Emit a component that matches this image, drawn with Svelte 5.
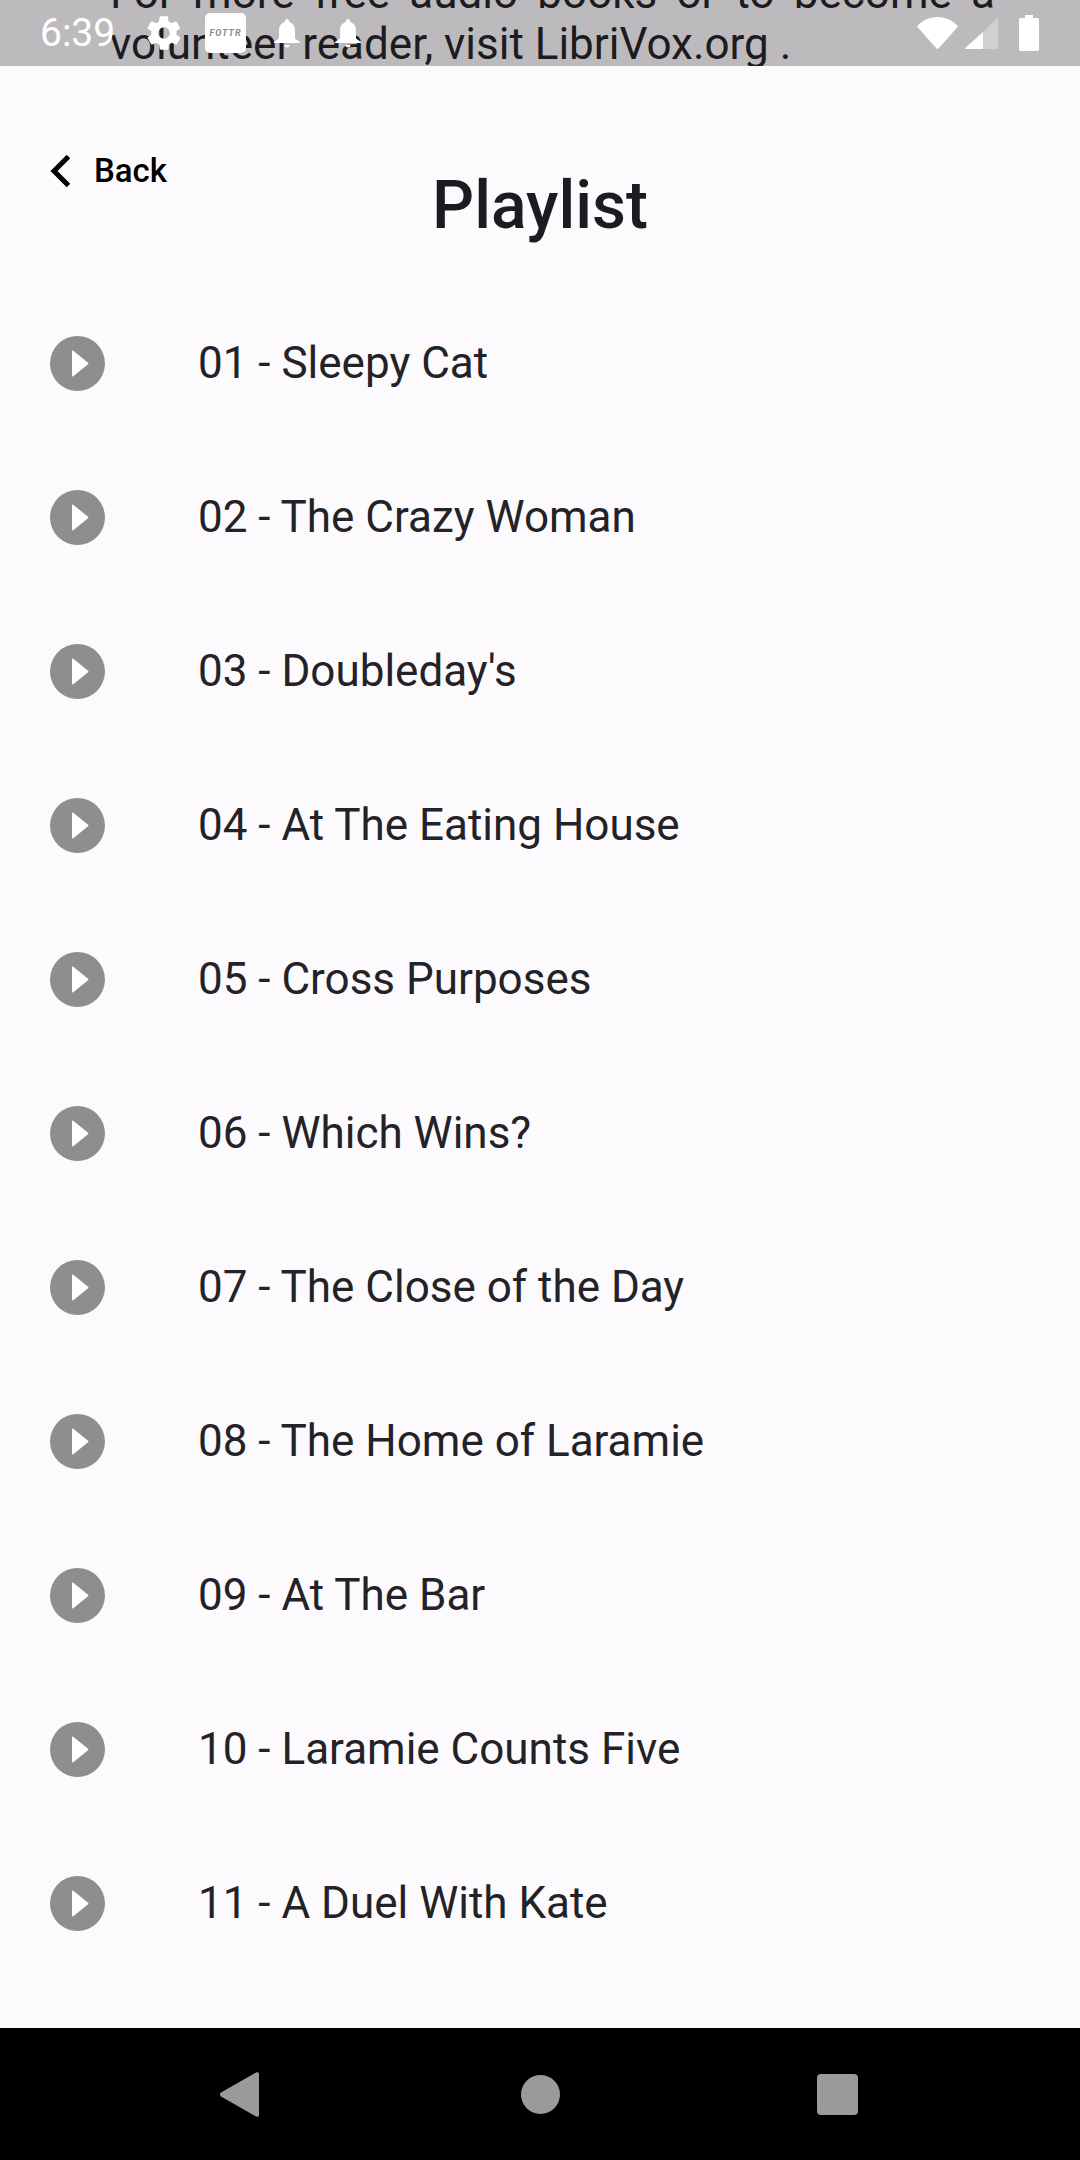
<script>
	const tracks = [
		'01 - Sleepy Cat',
		'02 - The Crazy Woman',
		"03 - Doubleday's",
		'04 - At The Eating House',
		'05 - Cross Purposes',
		'06 - Which Wins?',
		'07 - The Close of the Day',
		'08 - The Home of Laramie',
		'09 - At The Bar',
		'10 - Laramie Counts Five',
		'11 - A Duel With Kate'
	];
</script>

<div class="screen">
	<header class="status">
		<div class="behind">
			<p class="justified">For more free audio books or to become a</p>
			<p>volunteer reader, visit LibriVox.org .</p>
		</div>
		<div class="status-left">
			<span class="time">6:39</span>
			<svg class="gear" viewBox="0 0 24 24"><path d="M19.4 13c.1-.3.1-.7.1-1s0-.7-.1-1l2.1-1.600c.2-.2.2-.4.1-.6l-2-3.500c-.1-.2-.4-.3-.6-.2l-2.500 1c-.5-.4-1.100-.7-1.700-1l-.4-2.600c0-.3-.2-.5-.5-.5h-4c-.3 0-.5.2-.5.4l-.4 2.700c-.6.2-1.200.6-1.700 1l-2.500-1c-.2-.1-.5 0-.6.2l-2 3.500c-.1.2-.1.500.1.600L4.500 11c-.1.300-.1.700-.1 1s0 .7.100 1l-2.100 1.600c-.2.200-.2.400-.1.600l2 3.500c.1.200.4.300.6.200l2.500-1c.5.400 1.100.700 1.700 1l.4 2.600c0 .3.2.5.5.5h4c.3 0 .5-.2.5-.4l.4-2.700c.6-.2 1.200-.6 1.700-1l2.500 1c.2.100.5 0 .6-.2l2-3.500c.1-.2.100-.5-.1-.6zM12 15.500a3.500 3.500 0 1 1 0-7 3.500 3.500 0 0 1 0 7z"/></svg>
			<span class="tile">FOTTR</span>
			<svg class="bell" viewBox="0 0 26 29"><path d="M13 0c1.300 0 2.200 1 2.200 2.200v.8c3.800 1 5.800 4.300 5.800 8.200v8.300l5 3.500v1H0v-1l5-3.500v-8.300c0-3.900 2-7.200 5.800-8.200v-.8C10.800 1 11.700 0 13 0zM10.500 26h5a2.500 2.500 0 0 1-5 0z"/></svg>
			<svg class="bell second" viewBox="0 0 26 29"><path d="M13 0c1.300 0 2.200 1 2.200 2.200v.8c3.800 1 5.800 4.300 5.800 8.200v8.300l5 3.500v1H0v-1l5-3.500v-8.300c0-3.900 2-7.200 5.800-8.200v-.8C10.800 1 11.700 0 13 0zM10.500 26h5a2.500 2.500 0 0 1-5 0z"/></svg>
		</div>
		<div class="status-right">
			<svg class="wifi" viewBox="0 0 41 32"><path d="M0 9.500C5 3.500 12.500 0 20.500 0S36 3.500 41 9.500L21.500 31.500c-.6.600-1.400.600-2 0z"/></svg>
			<svg class="signal" viewBox="0 0 33 32"><path class="dim" d="M33 0v32H18V15z"/><path d="M18 15v17H1c-1 0-1-.7-.5-1.300z"/></svg>
			<svg class="battery" viewBox="0 0 20 36"><path d="M6 0h8v3h4.500c.8 0 1.500.7 1.500 1.500v30c0 .8-.7 1.500-1.500 1.500h-17C.7 36 0 35.300 0 34.500v-30C0 3.700.7 3 1.500 3H6z"/></svg>
		</div>
	</header>

	<main class="content">
		<div class="topbar">
			<button class="back">
				<svg viewBox="0 0 20 32"><path d="M18.500 1.500 4 16l14.500 14.500" /></svg>
				<span>Back</span>
			</button>
			<h1>Playlist</h1>
		</div>

		<ul class="list">
			{#each tracks as track}
				<li class="row">
					<span class="play">
						<svg viewBox="0 0 55 55"><path d="M22 15.500v24c0 .8.700 1.100 1.300.7L38 28.300c.5-.4.500-1.100 0-1.500L23.300 14.800c-.6-.4-1.300-.1-1.300.7z" /></svg>
					</span>
					<span class="name">{track}</span>
				</li>
			{/each}
		</ul>
	</main>

	<nav class="navbar">
		<svg class="nav-back" viewBox="0 0 39 45"><path d="M1 20.500 36 .500c1.500-.8 3 0 3 1.500v41c0 1.500-1.500 2.300-3 1.500L1 24.500c-1.300-.8-1.300-3.200 0-4z" /></svg>
		<span class="nav-home"></span>
		<span class="nav-recent"></span>
	</nav>
</div>

<style>
	:global(body) {
		margin: 0;
		background: #fcfafd;
	}

	.screen {
		display: flex;
		flex-direction: column;
		height: 2160px;
		font-family: Roboto, sans-serif;
		color: #1c1b1f;
		background: #fcfafd;
		overflow: hidden;
	}

	.status {
		position: relative;
		display: flex;
		align-items: center;
		justify-content: space-between;
		flex: none;
		height: 66px;
		padding: 0 41px 0 40px;
		background: #bcbabd;
		overflow: hidden;
	}

	.behind {
		position: absolute;
		left: 110px;
		top: -32px;
		width: 885px;
		font-size: 44px;
		line-height: 51px;
		color: #1c1b1f;
	}

	.behind p {
		margin: 0;
		white-space: nowrap;
	}

	.behind .justified {
		text-align: justify;
		text-align-last: justify;
		white-space: normal;
	}

	.status-left,
	.status-right {
		position: relative;
		display: flex;
		align-items: center;
		fill: #fff;
	}

	.time {
		width: 108px;
		font-size: 39px;
		line-height: 40px;
		color: #fff;
	}

	.gear {
		width: 40px;
		height: 40px;
		margin-left: -4px;
	}

	.tile {
		display: flex;
		align-items: center;
		justify-content: center;
		width: 41px;
		height: 40px;
		margin-left: 21px;
		border-radius: 5px;
		background: #fff;
		color: #8a888b;
		font-size: 9px;
		font-style: italic;
		font-weight: 700;
		letter-spacing: 1px;
	}

	.bell {
		width: 26px;
		height: 29px;
		margin-left: 28px;
	}

	.bell.second {
		margin-left: 35px;
	}

	.wifi {
		width: 41px;
		height: 32px;
	}

	.signal {
		width: 33px;
		height: 32px;
		margin-left: 7px;
	}

	.signal .dim {
		opacity: 0.3;
	}

	.battery {
		width: 20px;
		height: 36px;
		margin-left: 21px;
	}

	.content {
		flex: 1;
		background: #fcfafd;
	}

	.topbar {
		position: relative;
		display: flex;
		justify-content: center;
		padding-top: 102px;
	}

	.back {
		position: absolute;
		left: 50px;
		top: 85px;
		display: flex;
		align-items: center;
		gap: 24px;
		padding: 0;
		border: none;
		background: none;
		color: #000;
		font: 500 33px/40px Roboto, sans-serif;
	}

	.back svg {
		width: 20px;
		height: 32px;
		fill: none;
		stroke: #000;
		stroke-width: 5;
	}

	h1 {
		margin: 0;
		font-size: 66px;
		font-weight: 500;
		line-height: 76px;
		color: #1c1b1f;
	}

	.list {
		margin: 0;
		padding: 0;
		list-style: none;
		padding-top: 42px;
	}

	.row {
		display: flex;
		align-items: center;
		gap: 93px;
		height: 154px;
		padding-left: 50px;
	}

	.play {
		display: block;
		flex: none;
		width: 55px;
		height: 55px;
		border-radius: 50%;
		background: #8f8d90;
	}

	.play svg {
		display: block;
		width: 55px;
		height: 55px;
		fill: #fff;
	}

	.name {
		font-size: 44px;
		line-height: 52px;
		color: #232226;
	}

	.navbar {
		display: flex;
		align-items: center;
		flex: none;
		height: 132px;
		padding-left: 220px;
		background: #000;
	}

	.nav-back {
		width: 39px;
		height: 45px;
		fill: #9b999c;
	}

	.nav-home {
		width: 39px;
		height: 39px;
		margin-left: 262px;
		border-radius: 50%;
		background: #9b999c;
	}

	.nav-recent {
		width: 41px;
		height: 41px;
		margin-left: 257px;
		border-radius: 4px;
		background: #9b999c;
	}
</style>
